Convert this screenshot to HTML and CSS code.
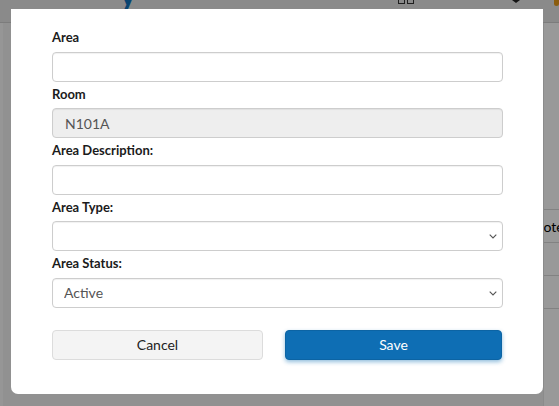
FILE: index.html
```html
<!DOCTYPE html>
<html lang="en">
<head>
<meta charset="utf-8">
<title>Edit Area</title>
<link rel="stylesheet" href="styles.css">
</head>
<body>
<div class="page">
  <header class="topbar">
    <span class="logo">y</span>
    <span class="spacer"></span>
    <span class="grid-icon"><i></i><i></i></span>
    <span class="caret"></span>
    <span class="user-dot"></span>
  </header>
  <main class="content">
    <div class="left-strip"></div>
    <div class="fill"></div>
    <div class="side-table">
      <div class="row head-gap"></div>
      <div class="row th"><span class="clip">Notes</span></div>
      <div class="row"></div>
      <div class="row"></div>
    </div>
  </main>
</div>
<div class="backdrop"></div>
<div class="modal">
  <form class="form">
    <label class="lbl first">Area</label>
    <input class="ctl" type="text">
    <label class="lbl">Room</label>
    <input class="ctl disabled" type="text" value="N101A" disabled>
    <label class="lbl">Area Description:</label>
    <input class="ctl" type="text">
    <label class="lbl">Area Type:</label>
    <div class="sel-wrap">
      <select class="ctl sel"><option></option></select>
      <svg class="chev" width="8" height="5" viewBox="0 0 8 5"><path d="M0.7 0.7 L4 4 L7.3 0.7" fill="none" stroke="#555" stroke-width="1.1"/></svg>
    </div>
    <label class="lbl">Area Status:</label>
    <div class="sel-wrap">
      <select class="ctl sel"><option>Active</option></select>
      <svg class="chev" width="8" height="5" viewBox="0 0 8 5"><path d="M0.7 0.7 L4 4 L7.3 0.7" fill="none" stroke="#555" stroke-width="1.1"/></svg>
    </div>
    <div class="actions">
      <button type="button" class="btn cancel">Cancel</button>
      <button type="button" class="btn save">Save</button>
    </div>
  </form>
</div>
</body>
</html>
```
FILE: styles.css
```css
* { box-sizing: border-box; }
html, body { margin: 0; height: 100%; }
body {
  font-family: Lato, "Open Sans", Arial, sans-serif;
  background: #f2f2f2;
  overflow: hidden;
}
.page { height: 100%; display: flex; flex-direction: column; }
.topbar {
  height: 23px;
  background: #e6e6e6;
  border-bottom: 1px solid #cfcfcf;
  display: flex;
  align-items: flex-start;
  padding-left: 120px;
}
.logo {
  font-weight: 700;
  font-size: 30px;
  line-height: 30px;
  color: #1072bb;
  margin-top: -21px;
}
.spacer { flex: 1; }
.grid-icon { display: flex; gap: 2px; margin-top: -3px; margin-right: 98px; }
.grid-icon i { width: 7px; height: 7px; border: 1.5px solid #333; display: block; }
.caret {
  width: 0; height: 0;
  border-left: 4px solid transparent;
  border-right: 4px solid transparent;
  border-top: 3px solid #222;
  margin-right: 34px;
}
.user-dot { width: 5px; height: 6px; background: #e69a1a; border-radius: 0 0 3px 3px; }
.content { flex: 1; display: flex; }
.left-strip { width: 3px; background: #fafafa; }
.fill { flex: 1; }
.side-table {
  width: 16px;
  background: #fff;
  border-left: 1px solid #e8e8e8;
  padding-top: 186px;
}
.row { border-bottom: 1px solid #d9d9d9; height: 33px; }
.row.head-gap { height: 1px; }
.row.th {
  font-size: 14px;
  line-height: 33px;
  color: #000;
  white-space: nowrap;
  overflow: hidden;
}
.clip { display: inline-block; margin-left: -11px; }
.backdrop {
  position: fixed;
  inset: 0;
  background: rgba(0, 0, 0, 0.4);
}
.modal {
  position: absolute;
  left: 11px;
  top: 9px;
  width: 532px;
  height: 385px;
  background: #fff;
  border-radius: 0 0 7px 7px;
  padding: 16px 40px 0 41px;
}
.form { display: flex; flex-direction: column; }
.lbl {
  display: block;
  font-size: 13px;
  font-weight: 700;
  line-height: 18px;
  color: #1b1b1b;
  margin: 3px 0 5.5px;
}
.ctl {
  display: block;
  width: 100%;
  height: 30px;
  border: 1px solid #cdcdcd;
  border-radius: 4px;
  box-shadow: inset 0 1px 1px rgba(0, 0, 0, 0.06);
  background: #fff;
  font-family: Lato, "Open Sans", Arial, sans-serif;
  font-size: 14px;
  color: #555;
  padding: 0 12px;
  outline: none;
}
.ctl.disabled { background: #eeeeee; color: #555; -webkit-text-fill-color: #555; opacity: 1; }
.sel-wrap { position: relative; }
.sel { appearance: none; -webkit-appearance: none; padding-left: 11px; }
.chev { position: absolute; right: 6px; top: 13px; }
.actions {
  display: grid;
  grid-template-columns: 211px 217px;
  column-gap: 22px;
  margin-top: 22px;
}
.btn {
  height: 30px;
  border-radius: 4px;
  font-family: Lato, "Open Sans", Arial, sans-serif;
  font-size: 14px;
  cursor: pointer;
}
.cancel { background: #f4f4f4; border: 1px solid #dcdcdc; color: #222; }
.save {
  background: #0e6eb4;
  border: 1px solid #0c64a4;
  color: #fff;
  box-shadow: 0 2px 4px rgba(14, 110, 180, 0.45);
}
```
